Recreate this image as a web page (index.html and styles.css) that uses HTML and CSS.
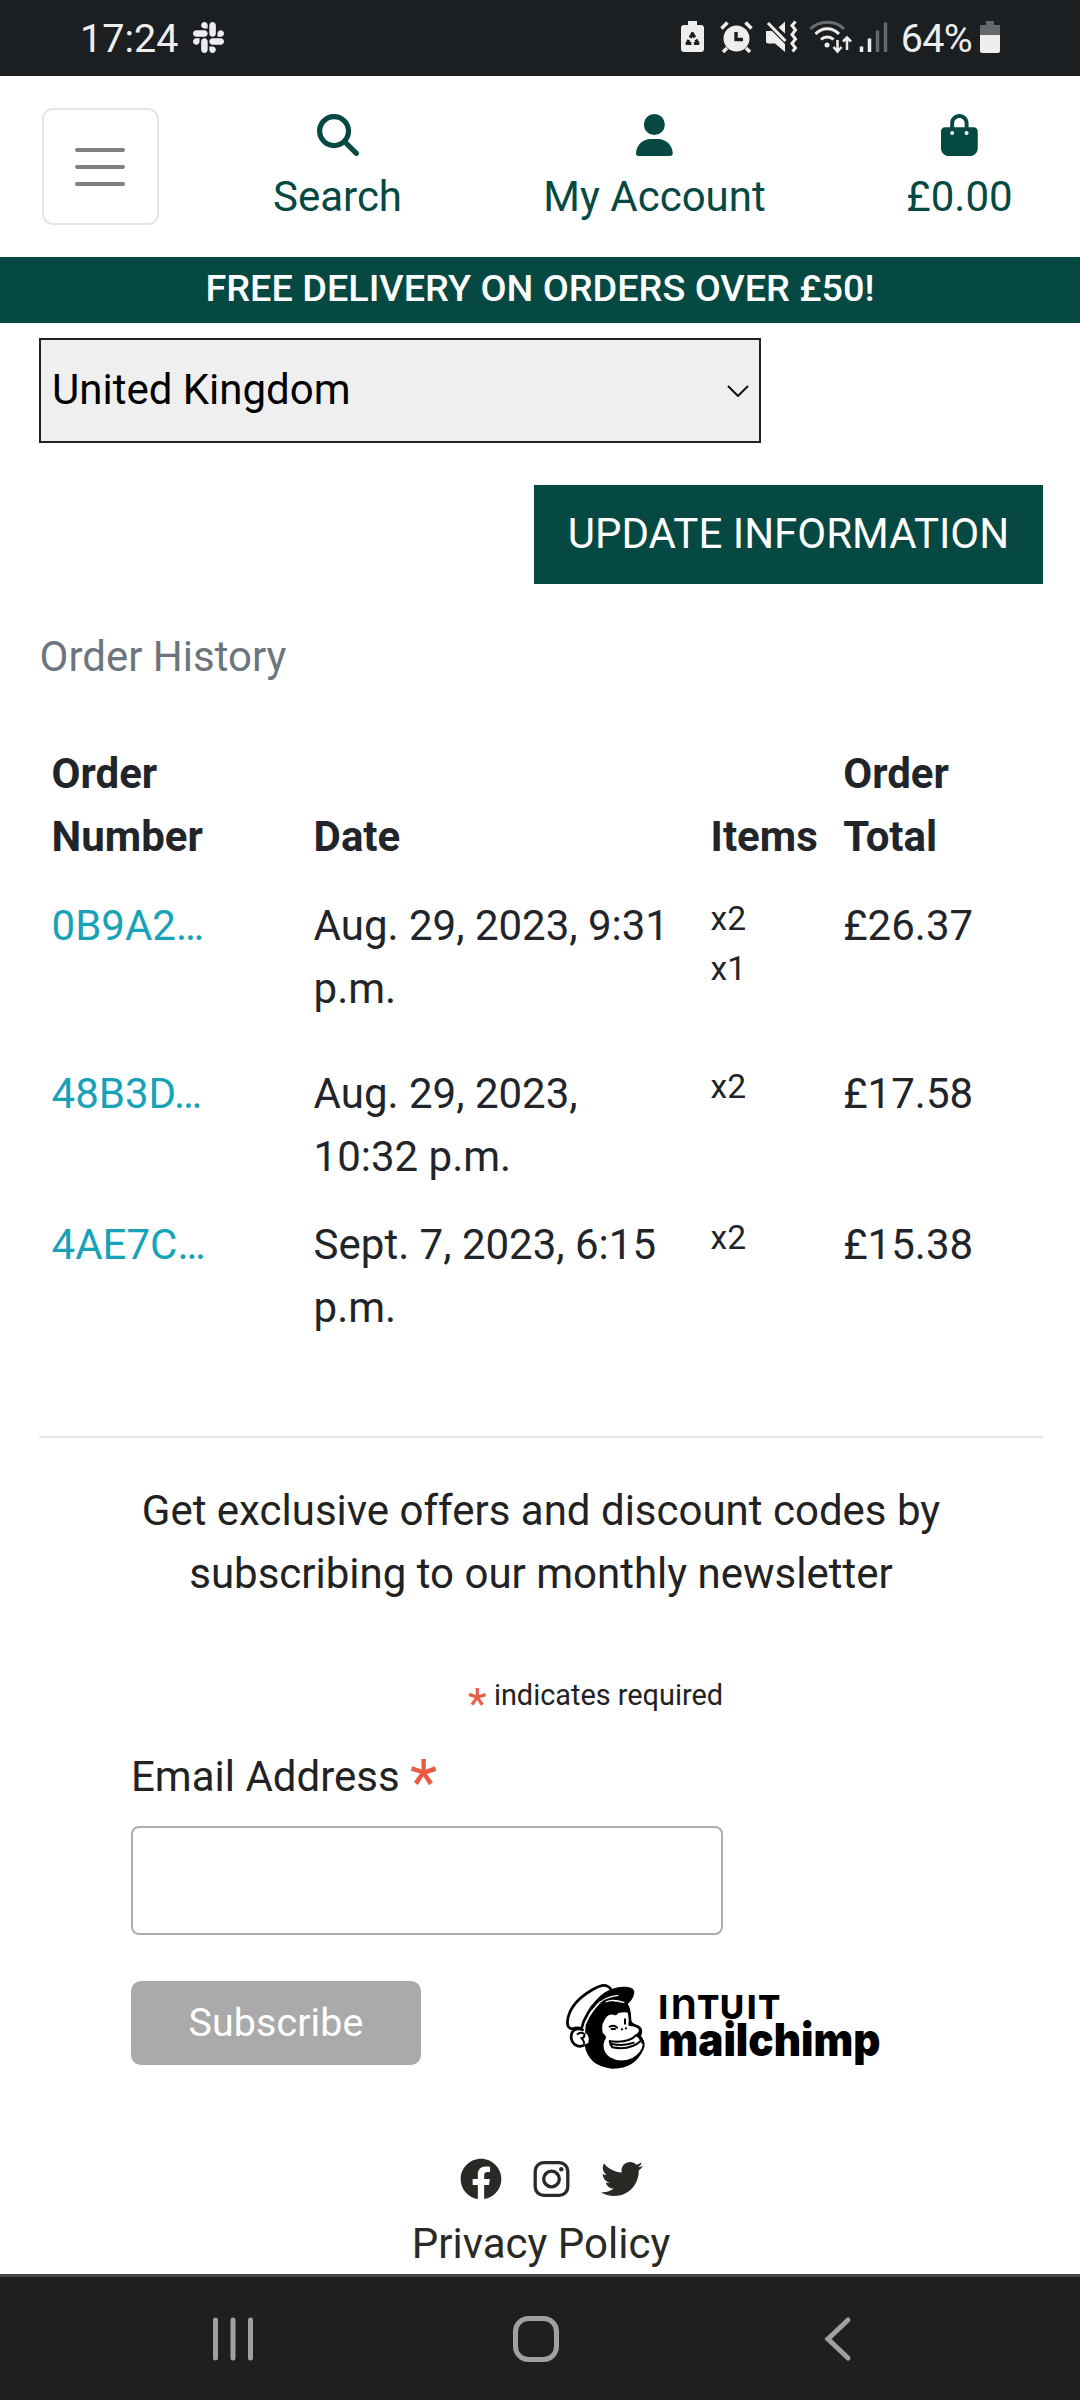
FILE: index.html
```html
<!DOCTYPE html>
<html lang="en">
<head>
<meta charset="utf-8">
<title>My Account</title>
<link rel="stylesheet" href="styles.css">
</head>
<body>
<div class="status">
  <span class="status-text">17:24</span>
  <svg class="slack" viewBox="0 32 448 448" fill="#ececf2"><path d="M94.12 315.1c0 25.9-21.16 47.06-47.06 47.06S0 341 0 315.1c0-25.9 21.16-47.06 47.06-47.06h47.06v47.06zm23.72 0c0-25.9 21.16-47.06 47.06-47.06s47.06 21.16 47.06 47.06v117.84c0 25.9-21.16 47.06-47.06 47.06s-47.06-21.16-47.06-47.06V315.1zm47.06-188.98c-25.9 0-47.06-21.16-47.06-47.06S139 32 164.9 32s47.06 21.16 47.06 47.06v47.06H164.9zm0 23.72c25.9 0 47.06 21.16 47.06 47.06s-21.16 47.06-47.06 47.06H47.06C21.16 243.96 0 222.8 0 196.9s21.16-47.06 47.06-47.06H164.9zm188.98 47.06c0-25.9 21.16-47.06 47.06-47.06 25.9 0 47.06 21.16 47.06 47.06s-21.16 47.06-47.06 47.06h-47.06V196.9zm-23.72 0c0 25.9-21.16 47.06-47.06 47.06-25.9 0-47.06-21.16-47.06-47.06V79.06c0-25.9 21.16-47.06 47.06-47.06 25.9 0 47.06 21.16 47.06 47.06V196.9zM283.1 385.88c25.9 0 47.06 21.16 47.06 47.06 0 25.9-21.16 47.06-47.06 47.06-25.9 0-47.06-21.16-47.06-47.06v-47.06h47.06zm0-23.72c-25.9 0-47.06-21.16-47.06-47.06 0-25.9 21.16-47.06 47.06-47.06h117.84c25.9 0 47.06 21.16 47.06 47.06 0 25.9-21.16 47.06-47.06 47.06H283.1z"/></svg>
  <svg class="tray" viewBox="0 0 210 34">
    <g fill="#eeeeef">
      <path d="M8 1h9v4h4a3 3 0 0 1 3 3v21a3 3 0 0 1-3 3H4a3 3 0 0 1-3-3V8a3 3 0 0 1 3-3h4z"/>
      <circle cx="56.500" cy="18.500" r="13"/>
    </g>
    <g fill="none" stroke="#1b1f22">
      <path d="M12.500 13.500L18 23.500H7Z" stroke-width="3.200" stroke-linejoin="round" stroke-dasharray="8.500 2.500" stroke-dashoffset="4"/>
      <path d="M56 12v7.500h7" stroke-width="3.400"/>
    </g>
    <g fill="none" stroke="#eeeeef" stroke-width="3.600">
      <path d="M41.500 8.500l6-6M71.500 8.500l-6-6M47 28l-4 4M66 28l4 4"/>
    </g>
    <path fill="#eeeeef" d="M86 11h6l3 3 10 10v8l-10-8.500h-7a2 2 0 0 1-2-2zM98.500 7.500L105 1.500v12z"/>
    <path fill="none" stroke="#eeeeef" stroke-width="3" d="M88 3l17.500 18M115.500 1.500l-3.500 4 3.500 4.500-3.500 4.500 3.500 4.500-3.500 4.500 3.500 4.500-3 3.500"/>
    <g fill="none" stroke="#eeeeef" stroke-width="3">
      <path stroke="#6a6d70" d="M130.500 9c9-9 25-9 33.500 0"/>
      <path d="M135.500 14c6.500-7 17-7 23.500 0M141 19.500c3.500-3.500 9-3.500 12.500 0"/>
      <path stroke-width="2.500" d="M157.500 20v10.500M153.500 27l4 4.500 4-4.500M167 30V18M163 21.500l4-4 4 4"/>
    </g>
    <circle cx="147" cy="25" r="2.500" fill="#eeeeef"/>
    <path stroke="#eeeeef" stroke-width="3.500" d="M181.500 32v-5.500M189.500 32V18.500"/>
    <path stroke="#66696b" stroke-width="3.500" d="M197.500 32V10.500M205.500 32V2.500"/>
  </svg>
  <span class="status-text percent">64%</span>
  <svg class="battery" viewBox="0 0 22 34"><path fill="#66696b" d="M7 1h8v4h6v11H1V5h6z"/><path fill="#eeeeef" d="M1 15h20v16a2 2 0 0 1-2 2H3a2 2 0 0 1-2-2z"/></svg>
</div>

<header class="header">
  <div class="cell menu-cell"><div class="toggler"><svg viewBox="0 0 50 40" stroke="#808080" stroke-width="4" stroke-linecap="round"><path d="M2 3h46M2 20h46M2 37h46"/></svg></div></div>
  <a class="cell"><svg viewBox="0 0 512 512"><path d="M416 208c0 45.9-14.9 88.3-40 122.7L502.600 457.400c12.500 12.500 12.500 32.800 0 45.300s-32.800 12.500-45.300 0L330.700 376c-34.400 25.200-76.800 40-122.700 40C93.100 416 0 322.900 0 208S93.100 0 208 0S416 93.100 416 208zM208 352a144 144 0 1 0 0-288 144 144 0 1 0 0 288z"/></svg><span>Search</span></a>
  <a class="cell"><svg viewBox="0 0 448 512"><path d="M224 256A128 128 0 1 0 224 0a128 128 0 1 0 0 256zm-45.700 48C79.800 304 0 383.800 0 482.300C0 498.700 13.300 512 29.700 512H418.300c16.400 0 29.700-13.300 29.700-29.700C448 383.800 368.200 304 269.700 304H178.300z"/></svg><span>My Account</span></a>
  <a class="cell"><svg viewBox="0 0 448 512"><path d="M160 112c0-35.300 28.700-64 64-64s64 28.700 64 64v48H160V112zm-48 48H48c-26.500 0-48 21.500-48 48V416c0 53 43 96 96 96H352c53 0 96-43 96-96V208c0-26.500-21.500-48-48-48H336V112C336 50.100 285.900 0 224 0S112 50.100 112 112v48zm24 48a24 24 0 1 1 0 48 24 24 0 1 1 0-48zm152 24a24 24 0 1 1 48 0 24 24 0 1 1 -48 0z"/></svg><span>£0.00</span></a>
</header>
<div class="banner">FREE DELIVERY ON ORDERS OVER £50!</div>

<main class="main">
  <div class="select"><span>United Kingdom</span><svg viewBox="0 0 22 12" fill="none" stroke="#111" stroke-width="2"><path d="M1 1l10 10L21 1"/></svg></div>
  <div class="actions"><button class="update">UPDATE INFORMATION</button></div>
  <p class="history">Order History</p>
  <table class="orders">
    <thead><tr><th class="c1">Order<br>Number</th><th class="c2">Date</th><th class="c3">Items</th><th>Order<br>Total</th></tr></thead>
    <tbody>
      <tr class="tall"><td><a>0B9A2…</a></td><td>Aug. 29, 2023, 9:31<br>p.m.</td><td class="items">x2<br>x1</td><td>£26.37</td></tr>
      <tr><td><a>48B3D…</a></td><td>Aug. 29, 2023,<br>10:32 p.m.</td><td class="items">x2</td><td>£17.58</td></tr>
      <tr><td><a>4AE7C…</a></td><td>Sept. 7, 2023, 6:15<br>p.m.</td><td class="items">x2</td><td>£15.38</td></tr>
    </tbody>
  </table>
  <hr class="rule">
  <p class="offer">Get exclusive offers and discount codes by<br>subscribing to our monthly newsletter</p>
  <form class="signup">
    <div class="required"><span class="star">*</span> indicates required</div>
    <label class="label" for="email">Email Address <span class="star">*</span></label>
    <input class="email" id="email" type="email">
    <div class="submit-row">
      <button class="subscribe" type="button">Subscribe</button>
      <svg class="mailchimp" viewBox="0 0 340 100">
        <g transform="scale(.33333)">
          <path d="M92 150Q112 100 150 74L218 86Q230 104 227 134Q232 146 250 152Q268 160 258 183Q274 204 266 222Q240 282 172 281Q100 276 88 208Z"/>
          <path fill="#fff" stroke="#000" stroke-width="8" stroke-linejoin="round" d="M52 162Q32 160 39 128Q50 82 106 48Q142 26 156 33Q168 38 171 52Q120 72 98 116Q84 138 80 160Q64 156 52 162Z"/>
          <path d="M150 52Q176 34 214 35Q240 37 238 54Q234 76 213 91Q190 75 162 78Q130 78 104 112Q118 72 150 52Z"/>
          <path fill="none" stroke="#fff" stroke-width="3.500" d="M122 94Q144 66 190 61M152 81Q172 70 208 83"/>
          <path fill="#fff" stroke="#000" stroke-width="8" d="M86 166Q62 154 51 173Q43 194 60 209Q76 220 92 207"/>
          <path fill="#fff" d="M88 172Q106 180 100 204L86 209L76 190Z"/>
          <path fill="none" stroke="#000" stroke-width="6" d="M66 179Q76 169 88 177Q90 187 80 190Q90 200 86 207"/>
          <path fill="#fff" d="M149 134Q158 116 176 119Q184 125 190 114Q210 109 222 114Q225 134 222 149Q253 152 255 165Q254 174 244 180Q262 190 264 205Q261 233 232 249Q195 265 165 247Q139 228 148 198Q160 184 143 174Q138 149 149 134Z"/>
          <path fill="none" stroke="#000" stroke-width="8" stroke-linejoin="round" d="M222 112Q227 134 224 149Q254 152 256 165Q256 174 246 181Q264 190 264 207"/>
          <path fill="none" stroke="#000" stroke-width="6" stroke-linecap="round" d="M164 155Q178 148 186 158M170 162h10M210 133v13M164 199Q224 205 244 180Q256 186 258 197Q226 227 172 217Q164 208 165 199M170 207Q210 214 236 203"/>
          <circle cx="201" cy="163" r="3.500"/><circle cx="213" cy="160" r="3.500"/>
        </g>
        <text class="intuit" y="44"><tspan x="103.500">I</tspan><tspan class="arch" x="115.500">n</tspan><tspan x="142 165 192 203">TUIT</tspan></text>
        <text class="chimp" x="103.500" y="81" textLength="222" lengthAdjust="spacingAndGlyphs">mailchimp</text>
      </svg>
    </div>
  </form>
  <div class="social">
    <svg viewBox="0 0 512 512"><path d="M504 256C504 119 393 8 256 8S8 119 8 256c0 123.780 90.690 226.380 209.250 245V327.690h-63V256h63v-54.640c0-62.150 37-96.480 93.670-96.480 27.140 0 55.520 4.840 55.520 4.840v61h-31.280c-30.800 0-40.410 19.120-40.410 38.730V256h68.780l-11 71.690h-57.780V501C413.310 482.380 504 379.780 504 256z"/></svg>
    <svg class="insta" viewBox="0 0 37 42"><rect x="2.200" y="4.700" width="32.600" height="32.600" rx="8.500" fill="none" stroke="#292926" stroke-width="3.300"/><circle cx="18.500" cy="21" r="7.800" fill="none" stroke="#292926" stroke-width="3.300"/><circle cx="28.300" cy="11.300" r="2.200"/></svg>
    <svg viewBox="0 0 512 512"><path d="M459.370 151.716c.325 4.548.325 9.097.325 13.645 0 138.720-105.583 298.558-298.558 298.558-59.452 0-114.680-17.219-161.137-47.106 8.447.974 16.568 1.299 25.340 1.299 49.055 0 94.213-16.568 130.274-44.832-46.132-.975-84.792-31.188-98.112-72.772 6.498.974 12.995 1.624 19.818 1.624 9.421 0 18.843-1.300 27.614-3.573-48.081-9.747-84.143-51.980-84.143-102.985v-1.299c13.969 7.797 30.214 12.670 47.431 13.319-28.264-18.843-46.781-51.005-46.781-87.391 0-19.492 5.197-37.360 14.294-52.954 51.655 63.675 129.300 105.258 216.365 109.807-1.624-7.797-2.599-15.918-2.599-24.040 0-57.828 46.782-104.934 104.934-104.934 30.213 0 57.502 12.670 76.670 33.137 23.715-4.548 46.456-13.320 66.599-25.340-7.798 24.366-24.366 44.833-46.132 57.827 21.117-2.273 41.584-8.122 60.426-16.243-14.292 20.791-32.161 39.308-52.628 54.253z"/></svg>
  </div>
  <a class="privacy">Privacy Policy</a>
</main>

<nav class="nav">
  <svg viewBox="0 0 48 48"><path d="M6.500 5v38M24 5v38M41.500 5v38"/></svg>
  <svg viewBox="0 0 48 48"><rect x="3.500" y="3.500" width="41" height="41" rx="13"/></svg>
  <svg viewBox="0 0 48 48"><path d="M34 5L14 24l20 19"/></svg>
</nav>
</body>
</html>
```
FILE: styles.css
```css
* { box-sizing: border-box; }
body {
  margin: 0;
  width: 1080px;
  height: 2400px;
  overflow: hidden;
  display: flex;
  flex-direction: column;
  background: #fff;
  color: #212529;
  font-family: Roboto, "Liberation Sans", sans-serif;
  font-size: 42px;
  line-height: 63px;
}
svg { display: block; flex: none; }
p { margin: 0; }
button, input { font-family: inherit; border: 0; margin: 0; padding: 0; }

.status {
  flex: none;
  height: 76px;
  display: flex;
  align-items: center;
  padding: 0 79px 2px 80px;
  background: #1b1f22;
  color: #eeeeef;
}
.status-text { font-size: 39.500px; line-height: 46px; padding-top: 4px; }
.slack { width: 31px; height: 31px; margin-left: 15px; }
.tray { width: 210px; height: 34px; margin-left: auto; }
.percent { margin-left: 11px; letter-spacing: -0.700px; }
.battery { width: 22px; height: 34px; margin-left: 7px; }

.header {
  flex: none;
  height: 181px;
  display: grid;
  grid-template-columns: 196px 199px 435px 175px;
  padding: 0 33px 0 42px;
  color: #064943;
}
.cell { display: flex; flex-direction: column; align-items: center; padding-top: 38px; }
.cell > svg { height: 42px; fill: #064943; margin-bottom: 9px; }
.menu-cell { align-items: flex-start; padding-top: 32px; }
.toggler {
  width: 117px;
  height: 117px;
  display: flex;
  align-items: center;
  justify-content: center;
  border: 2px solid #e5e5e5;
  border-radius: 11px;
}
.toggler svg { width: 50px; height: 40px; margin-right: 1px; }
.banner {
  flex: none;
  height: 66px;
  background: #064943;
  color: #fff;
  text-align: center;
  font-size: 37.800px;
  font-weight: 500;
  line-height: 63px;
}

.main { flex: 1; min-height: 0; overflow: hidden; padding: 15px 37px 0 39px; }
.select {
  width: 722px;
  height: 105px;
  display: flex;
  align-items: center;
  justify-content: space-between;
  padding: 0 10px 3px 11px;
  border: 2px solid #222;
  background: #efefef;
  color: #000;
}
.select svg { width: 22px; height: 12px; margin-top: 3px; }
.actions { display: flex; justify-content: flex-end; margin-top: 42px; }
.update {
  width: 509px;
  height: 99px;
  background: #064943;
  color: #fff;
  font-size: 42px;
  padding-bottom: 2px;
}
.history { margin: 41px 0 0 0.500px; color: #6c757d; }

.orders { width: 1004px; margin-top: 41px; border-collapse: collapse; table-layout: fixed; }
.orders th, .orders td { padding: 12.600px; text-align: left; vertical-align: top; }
.orders th { padding-bottom: 13.600px; vertical-align: bottom; font-weight: 700; }
.orders a { color: #17a2b8; }
.orders .items { font-size: 33.600px; line-height: 50.400px; }
.tall { height: 168.200px; }
.c1 { width: 262px; }
.c2 { width: 397px; }
.c3 { width: 132.600px; }

.rule { height: 2px; margin: 84px 0 0; border: 0; background: #e5e5e5; }
.offer { margin-top: 41px; text-align: center; color: #222; }
.signup { margin-left: 92px; color: #222; }
.required { width: 592px; margin-top: 69px; text-align: right; font-size: 28.875px; line-height: 43px; }
.label { display: block; margin-top: 28px; }
.star { position: relative; top: 13px; font-size: 150%; line-height: 0; color: #e85c41; }
.email {
  display: block;
  width: 592px;
  height: 109px;
  margin-top: 18px;
  border: 2px solid #abadae;
  border-radius: 8px;
  background: #fff;
}
.submit-row { display: flex; align-items: flex-start; margin-top: 46px; }
.subscribe {
  width: 290px;
  height: 84px;
  border-radius: 10px;
  background: #aaa;
  color: #fff;
  font-size: 39.375px;
  letter-spacing: 0.100px;
  padding-bottom: 1px;
}
.mailchimp { width: 340px; height: 100px; margin: -6px 0 -10px 134px; overflow: visible; }
.intuit { font: 800 33px Inter, sans-serif; }
.arch { font-size: 43.500px; font-weight: 600; }
.chimp { font: 900 46px Inter, sans-serif; }

.social { display: flex; align-items: center; gap: 31px; margin: 93px 0 0 421px; fill: #292926; }
.social svg { width: 42px; height: 42px; }
.social .insta { width: 37px; }
.privacy { display: block; margin-top: 12px; text-align: center; color: #292926; }

.nav {
  flex: none;
  height: 126px;
  display: flex;
  justify-content: space-between;
  padding: 38px 218px 0 209px;
  border-top: 3px solid #444;
  background: #1f1f1f;
}
.nav svg { width: 48px; height: 48px; fill: none; stroke: #a0a0a0; stroke-width: 5; stroke-linecap: round; }
```
